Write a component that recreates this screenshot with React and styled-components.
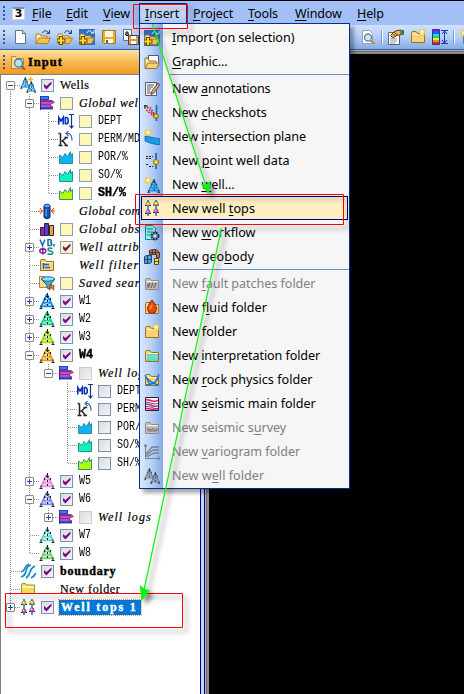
import React from 'react';
import styled, { createGlobalStyle } from 'styled-components';

const Global = createGlobalStyle`
  * { box-sizing: border-box; }
  html, body { margin: 0; padding: 0; background: #000; overflow: hidden; }
`;

const Window = styled.div`
  position: relative; width: 464px; height: 694px; overflow: hidden;
  display: flex; flex-direction: column; background: #000;
  border-top: 1px solid #000;
  font-family: "Noto Sans", "Open Sans", sans-serif; color: #000;
`;
const MenuBar = styled.div`
  height: 24px; flex: none; display: flex; align-items: center; background: #a2c0f6; padding-left: 3px;
`;
const Grip = styled.div`
  width: 2px; height: 14px; flex: none;
  background: repeating-linear-gradient(to bottom, #39558c 0 2px, transparent 2px 4px);
`;
const MenuTitle = styled.span`
  width: ${p => p.$w}px; height: 22px; margin-top: 2px; flex: none; font-size: 12.5px; line-height: 22px; white-space: pre;
  letter-spacing: -0.1px;
  u { text-underline-offset: 2px; }
  ${p => p.$open && `
    margin-left: -6px; margin-right: 6px; padding-left: 5px; border: 1px solid #002d96; border-bottom: 0;
    line-height: 20px; background: linear-gradient(#dbe8fd, #a9c5f3);
  `}
`;
const AppMark = styled.div`
  width: 13px; height: 13px; margin: 0 7px 0 7px; background: #fff; border: 1px solid #d0d8e6;
  border-top: 2px solid #7d93bb; font: bold 11px/10px "DejaVu Sans", sans-serif; text-align: center;
`;
const ToolBar = styled.div`
  height: 25px; flex: none; display: flex; align-items: center; padding-left: 3px;
  background: linear-gradient(#cfe1fc, #b5d0f7 50%, #85aae4);
  border-bottom: 1px solid #3b619c;
`;
const ToolIcon = styled.div`
  width: 16px; height: 16px; flex: none; margin-left: ${p => p.$gap ?? 6}px; display: flex;
`;
const ToolSep = styled.div`
  width: 2px; height: 14px; flex: none; margin-left: ${p => p.$gap}px; background: #6d93cf; border-right: 1px solid #fff;
`;
const Workspace = styled.div`flex: 1; min-height: 0; display: flex;`;
const InputPane = styled.div`width: 200px; flex: none; display: flex; flex-direction: column;`;
const PaneHeader = styled.div`
  height: 24px; flex: none; display: flex; align-items: center; padding-left: 3px; gap: 5px;
  background: linear-gradient(#ffe2a0, #f8b751 50%, #ef9b23);
`;
const PaneTitle = styled.span`
  font: bold 12.5px/20px "Liberation Serif", serif; letter-spacing: 1px; -webkit-text-stroke: .4px #000; margin-left: -3px;
`;
const Tree = styled.div`
  flex: 1; min-height: 0; border-left: 1px solid #808080; border-top: 1px solid #808080; background: #fff; padding-top: 1px; overflow: hidden;
`;
const Splitter = styled.div`
  width: 9px; flex: none;
  background: linear-gradient(to right, #000080 0 1px, #c3d5fb 1px 4px, #000080 4px 5px, #b8b8b8 5px 6px, #6e6e6e 6px 7px, #8f8f8f 7px 9px);
`;
const Canvas = styled.div`
  flex: 1; background: linear-gradient(#a9a9a9 0 1px, #6f6f6f 1px 2px, #8b8b8b 2px 4px, #000 4px);
`;

const Row = styled.div`height: 18px; display: flex; align-items: center; white-space: pre;`;
const Guide = styled.div`
  width: 19px; height: 18px; flex: none; position: relative;
  &::before {
    content: ""; position: absolute; left: 9px; width: 1px;
    top: ${p => (p.$kind === 'f' ? 9 : 0)}px; bottom: ${p => (p.$kind === 'l' ? 9 : 0)}px;
    background: ${p => (p.$kind === ' ' ? 'none' : 'repeating-linear-gradient(to bottom, #909090 0 1px, transparent 1px 2px)')};
  }
  &::after {
    content: ""; position: absolute; left: 10px; right: 0; top: 9px; height: 1px;
    background: ${p => ('ftl'.includes(p.$kind) ? 'repeating-linear-gradient(to right, #909090 0 1px, transparent 1px 2px)' : 'none')};
  }
`;
const Expander = styled.div`
  position: absolute; z-index: 1; left: 5px; top: 5px; width: 9px; height: 9px; background: #fafafa; border: 1px solid #8c8c8c; border-radius: 1px;
  &::before { content: ""; position: absolute; left: 1px; top: 3px; width: 5px; height: 1px; background: #234a9a; }
  &::after { content: ""; position: absolute; left: 3px; top: 1px; width: 1px; height: 5px; background: ${p => (p.$open ? 'none' : '#234a9a')}; }
`;
const IconSlot = styled.div`width: 16px; height: 16px; flex: none; display: flex;`;
const CheckSlot = styled.div`width: 24px; flex: none; display: flex; padding-left: 5px;`;
const Box = styled.div`
  width: 13px; height: 13px; display: flex;
  border: 1px solid ${p => (p.$kind === 'dim' ? '#cccccc' : p.$kind[0] === 'y' ? '#8c9fb0' : '#7892b5')};
  background: ${p => (p.$kind[0] === 'y' ? '#fdf8b8' : 'linear-gradient(135deg, #dcdcdc, #f4f4f4)')};
`;
const Label = styled.span`
  font-family: "Liberation Mono", monospace; font-size: 12px; line-height: 15px; height: 15px;
  font-weight: ${p => (p.$bold ? 700 : 400)};
  -webkit-text-stroke: ${p => (p.$bold ? '.4px' : '0')};
  transform: scaleX(${p => (p.$bold ? 0.972 : 0.833)}); transform-origin: 0 50%;
`;
const SerifLabel = styled.span`
  font-family: "Liberation Serif", serif; font-size: 12px; line-height: 15px; height: 15px;
  font-weight: ${p => (p.$bold ? 700 : 400)}; font-style: ${p => (p.$italic ? 'italic' : 'normal')};
  letter-spacing: ${p => p.$ls}px; -webkit-text-stroke: ${p => (p.$bold ? '.4px' : '.2px')};
  ${p => p.$selected && 'color: #fff; background: #0078d7; outline: 1px dotted #f0a050; width: 82px; padding-left: 2px; margin-left: -1px;'}
`;

const DropMenu = styled.div`
  position: absolute; left: 139px; top: 22px; width: 211px; height: 466px; border: 1px solid #002d96;
  padding-top: 1px; box-shadow: 4px 4px 4px rgba(0,0,0,.35); display: flex; flex-direction: column;
  background: linear-gradient(to right, #dce9fc, #b5cff5 12px, #83a9e6 23px, #f6f6f6 23px);
`;
const Item = styled.div`
  height: 24px; flex: none; display: flex; align-items: center; white-space: pre;
  margin: 0 1px; padding-left: ${p => (p.$active ? 2 : 3)}px; padding-top: ${p => (p.$active ? 0 : 1)}px; gap: 12px;
  font-size: 12.6px; color: ${p => (p.$disabled ? '#808080' : '#000')};
  border: ${p => (p.$active ? '1px solid #000080' : '0')}; background: ${p => (p.$active ? '#ffeec2' : 'none')};
  u { text-underline-offset: 2px; }
`;
const ItemText = styled.span`letter-spacing: ${p => p.$ls}px;`;
const Divider = styled.div`height: 1px; flex: none; margin: 1px 0 1px 30px; background: #6a8ccb;`;
const Marks = styled.svg`position: absolute; left: 0; top: -1px; pointer-events: none;`;

const Svg = ({ children }) => <svg width="16" height="16" viewBox="0 0 16 16">{children}</svg>;
const FolderShape = ({ fill = '#f6d27a', stroke = '#9b7020' }) => (
  <g><path d="M1.500 13.500V3.500q0-1 1-1h3.500l1.500 2h7v9z" fill={fill} stroke={stroke} /><path d="M2.500 5.500h11" stroke="#fff6d0" /></g>
);
const Spark = ({ x = 12, y = 3 }) => (
  <g transform={`translate(${x} ${y})`}><path d="M-3-3l6 6m0-6l-6 6M0-3.500v7M-3.500 0h7" stroke="#f0c440" strokeWidth="1.300" /><circle r="2" fill="#fff5a5" /></g>
);
const OpenFolder = () => (
  <g><path d="M1 14V5h4l1 2h6v2" fill="#fff0b8" stroke="#b07d1e" /><path d="M1 14.500L4 9h11.500l-3 5.500z" fill="#f5c154" stroke="#b07d1e" /></g>
);
const Hop = () => <path d="M7.500 4c1-3 4.500-3 6 0M14.500 1v3.500h-3" fill="none" stroke="#203a6b" />;
const Plus = () => <path d="M4 7v9M-.5 11.500h9" stroke="#6d4c00" strokeWidth="4" />;
const PlusTop = () => <path d="M4 8v7M.5 11.500h7" stroke="#ffdc20" strokeWidth="2" />;
const Well = ({ c }) => (
  <g fill="none" stroke={c}>
    <path d="M8 1L2 14M8 1L14 14" strokeWidth="1.900" />
    <path d="M5 6.500h6M4 9.500h8M1 13.500h14" strokeWidth="1.300" />
    <path d="M4 10l8 3M12 10l-8 3" strokeWidth=".9" />
    <path d="M8.500 0v5M8.500 7v2M8.500 11v2M7 3.500h3M5.500 5v2M11.500 5v2M.5 15.500h3M12.500 15.500h3M2 12.500v3M14 12.500v3" stroke="#222" />
  </g>
);
const Area = ({ c }) => <path d="M1.500 14.500V6L5 8.500L7 4.500L9.500 7.500L12.500 2.500V6.500L14.500 4.500V14.500z" fill={c} stroke="#2f8f8f" />;
const Tops = () => (
  <g><path d="M4 0v16M12 0v16" stroke="#1783f0" strokeWidth="1.600" />
    {[[4, 4, '#ffd51c'], [12, 3.500, '#ffd51c'], [4, 12, '#e04ae8'], [12, 11, '#e04ae8']].map(([x, y, f], i) => (
      <g key={i}><path d={`M${x - 3} ${y + 1.500}h6`} stroke="#222" /><circle cx={x} cy={y} r="2.100" fill={f} stroke="#54432a" strokeWidth=".6" /><circle cx={x - .6} cy={y - .7} r=".7" fill="#fff" /></g>))}
  </g>
);

const art = {
  page: <g><path d="M2.500 1.500h7l3 3v10h-10z" fill="#fff" stroke="#65718b" /><path d="M9.500 1.500v3h3" fill="#d5dced" stroke="#65718b" /></g>,
  open: <g><OpenFolder /><Hop /></g>,
  openPlus: <g><OpenFolder /><Hop /><Plus /><PlusTop /></g>,
  importSel: <g><path d="M0 0h16v16H0z" fill="#2e6fc4" /><OpenFolder /><path d="M8 4c1-3 4-3 5 0M15 1v3h-3" fill="none" stroke="#fff" /><Plus /><PlusTop /></g>,
  floppy: <g><path d="M1.500 1.500h13v13h-12l-1-1z" fill="#e6ad39" stroke="#a87920" /><path d="M4 2h8v6H4z" fill="#fff6d4" /><path d="M4 10h8v4H4z" fill="#fff" /><path d="M5 11h2v3H5z" fill="#7e5a14" /></g>,
  saveAs: <g><path d="M.5 .5h8v11h-8z" fill="#fff" stroke="#5f6f8e" /><path d="M2 4h4m-2-2v5m-2-2l2 2 2-2" fill="none" stroke="#111" /><path d="M5.500 6.500h10v9h-10z" fill="#d99b55" stroke="#674018" /><path d="M8 7h5v3H8zM8 12h5v3H8z" fill="#fff" /></g>,
  preview: <g><path d="M2.500 1.500h7l3 3v10h-10z" fill="#fff" stroke="#98a4b6" /><path d="M10.500 11.500l4 3.500" stroke="#c18a34" strokeWidth="2" /><circle cx="8" cy="8.500" r="3.500" fill="#cfe9f7" stroke="#5f88a5" strokeWidth="1.300" /></g>,
  hand: <g><path d="M.5 3.500h11v12H.5z" fill="#fff" stroke="#57627c" /><path d="M2 10h7M2 12h7M2 14h5" stroke="#8a94aa" /><path d="M2.500 6.500L7 2l6-1v5l-4 0-4 3z" fill="#e0b84e" stroke="#604516" /><path d="M4 4l4 4M6 3l4 4" stroke="#604516" strokeWidth=".8" /><path d="M13 1h3v5h-3z" fill="#3c7a50" /></g>,
  newFolder: <g><FolderShape /><Spark /></g>,
  scale: <g>{['#9a16e8', '#2459ff', '#14dce8', '#27d744', '#f7ef21', '#f68b1e', '#e91d27'].map((c, i) => <path key={c} d={`M0 ${i * 2 + 1}h8v2H0z`} fill={c} />)}<path d="M.5 .5h7v15h-7zM9 1.500h7M9 14.500h7M12.500 2v12M10 5l2.500-3L15 5M10 11l2.500 3L15 11" fill="none" stroke="#173d9c" /></g>,
  sparkPage: <g><path d="M3.500 3.500h11v11h-11z" fill="#fff" stroke="#65718b" /><Spark x={4} y={4} /></g>,
  finder: <g><path d="M1.500 14.500v-12h4l1 2h7v10z" fill="#f8dd9b" stroke="#b48a38" /><path d="M11 12l4 3.500" stroke="#826137" strokeWidth="2.200" /><circle cx="8.500" cy="9" r="4" fill="#b8e2fb" stroke="#47769a" strokeWidth="1.300" /></g>,
  graphic: <g><path d="M4.500 1.500h10v9h-10z" fill="#fff" stroke="#445b78" /><path d="M1 14V4h3l1 3h7v2" fill="#ffe9a5" stroke="#947026" /><path d="M1 14.500L4 9h11.500l-3 5.500z" fill="#f8d070" stroke="#947026" /></g>,
  wells: <g><g transform="translate(0 0) scale(.65 .75)"><Well c="#1489db" /></g><g transform="translate(6 4) scale(.65 .75)"><Well c="#1489db" /></g><path d="M10.500 0v5M8 2.500h5" stroke="#efb82a" strokeWidth="1.700" /></g>,
  logs: <g><path d="M1 1h9v2H9v2h4l3 2.500-4 2v1l2 1v3H1z" fill="#7a35b8" /><path d="M1 1h9v4H1z" fill="#2446c4" /><path d="M2 3h7" stroke="#48c0ee" /><path d="M2 6h11v2H1z" fill="#8a2a9c" /><path d="M2 7h11l3 .8-5 1.200H2z" fill="#ef3e9b" /><path d="M2 11h9" stroke="#6c8af2" strokeWidth="1.300" /><path d="M1 13.500h13" stroke="#2a39a8" /><path d="M1.500 1v14" stroke="#3e247c" /></g>,
  md: <g><path d="M.8 11.500V4.500l2.200 3.500 2.200-3.500v7M7.300 4.500v6.300h1c2.600 0 2.600-6.300 0-6.300z" fill="none" stroke="#0a34bd" strokeWidth="1.600" /><path d="M11 1.500h5M13.500 2v13M11.500 12.500l2 2.500 2-2.500" stroke="#143987" strokeWidth="1.200" fill="none" /></g>,
  perm: <g><path d="M2.500 2.500v12M8.500 6.500l-5 4M4.500 9.500l4 5M.5 2.500h2M.5 14.500h4M6.500 14.500h3.500M6.500 6.500h3.500" stroke="#262626" strokeWidth="1.500" /><path d="M9 2.500h2q3 1.500 3 7M10.500 0L8 2.500l2.500 2.500" fill="none" stroke="#3566b7" strokeWidth="1.200" /></g>,
  por: <Area c="#08b4ff" />, so: <Area c="#0af5bb" />, sh: <Area c="#b3ff00" />,
  completion: <g><path d="M5 3v11c0 2 6 2 6 0V3z" fill="#1455ba" stroke="#111f55" /><ellipse cx="8" cy="3" rx="3" ry="1.800" fill="#62aaff" stroke="#16438e" /><path d="M1 5l2.500 3L1 11M15 5l-2.500 3L15 11M0 8h4M12 8h4" fill="none" stroke="#e24518" /><path d="M7 6v7" stroke="#67bcff" /></g>,
  observed: <g stroke="#302040"><path d="M1.500 6.500h4v8h-4z" fill="#9d25ad" /><path d="M5.500 2.500h4v12h-4z" fill="#5d3ada" /><path d="M10.500 4.500h4v10h-4z" fill="#e4ad2a" /></g>,
  attrs: <g fill="none" strokeWidth="1.500"><path d="M1 .5l2.500 6L6 .5M9 .5v6h2.500c2-.5 1.500-3-.5-3 2 0 1.500-3-.5-3zM15 5v2.500" stroke="#146c9b" /><ellipse cx="3.800" cy="12" rx="3" ry="2.300" stroke="#8c189b" /><path d="M3.800 8.500v7" stroke="#8c189b" /><path d="M13.500 9.500q-4.500-1.500-4.500 1 0 1.200 2.500 1.500 3.500 1 1.500 3-2 .8-4.500-.3" stroke="#159080" /></g>,
  filter: <g><FolderShape /><path d="M4.500 6v6M5 7.500h5M6 10.500h5" stroke="#1766bd" strokeWidth="1.500" /></g>,
  saved: <g><path d="M.5 1.500h5l1 2h6v9H.5z" fill="#f9dc95" stroke="#b08a40" /><path d="M2 4h14l-5 6v4l-3-1V10z" fill="#4aafdf" stroke="#155d8e" /><ellipse cx="9" cy="4" rx="6.500" ry="2.200" fill="#99daf5" stroke="#176a9d" /><path d="M10.500 15.500v-5h4v5M11 13h4" fill="none" stroke="#a45c22" strokeWidth="1.500" /></g>,
  w1: <Well c="#168ff0" />, w2: <Well c="#17d688" />, w3: <Well c="#9ddc16" />, w4: <Well c="#e49a16" />, w5: <Well c="#e98be5" />, w6: <Well c="#858bea" />, w7: <Well c="#65d5d5" />, w8: <Well c="#71ce73" />,
  boundary: <g fill="none" stroke="#1489c8" strokeWidth="1.700"><path d="M1 9q3-1 4-4t4-4M1 14q4-1 5-6t5-6M6 15q3-2 4-6t5-6M11 15q3-1 5-5" /></g>,
  folder: <g><path d="M1.500 12.500v-9q0-1 1-1h3l1 1.500h8v8.500z" fill="#f2dc60" stroke="#a08a2d" /><path d="M2 6h12" stroke="#fff7a8" strokeWidth="2" /></g>,
  tops: <Tops />,
  notes: <g><path d="M1.500 1.500h11v13h-11z" fill="#f8f8f8" stroke="#555d68" /><path d="M3 4h7M3 6h6M3 8h4M3 10h3M3 12h6" stroke="#505a68" /><path d="M14 2L8 10l-1 3.500 3-1.500 5.500-8z" fill="#d9a59c" stroke="#734429" /></g>,
  checkshots: <g><path d="M12.500 0v16" stroke="#1769c9" strokeWidth="1.600" /><path d="M3 2l8 9M2 5l9 7M6 2l5 8" stroke="#d32532" strokeDasharray="2 1" strokeWidth="1.400" /><path d="M0 1h4M1 0v4" stroke="#111" /><circle cx="12" cy="11" r="2.300" fill="#ffd21f" stroke="#75550d" /></g>,
  plane: <g><path d="M1 7q6 1 15 3v6Q7 15 1 12z" fill="#1d99e7" stroke="#075c9c" strokeWidth=".7" /><Spark x={4} y={3.500} /></g>,
  point: <g><path d="M12 0v16" stroke="#175cc1" strokeWidth="1.600" /><path d="M2 3.500h7M2 5.500h5M2 11.500h3M5 13.500h4" stroke="#222" strokeDasharray="2 1" /><circle cx="12" cy="9" r="2.500" fill="#ffd72a" stroke="#8a6619" /></g>,
  newWell: <g><g transform="translate(3 2) scale(.85 .88)"><Well c="#198be0" /></g><Spark x={4} y={3.500} /></g>,
  workflow: <g><path d="M1.500 .5h7l3 3v11h-10z" fill="#8af2ec" stroke="#1c8190" /><path d="M3 4h6M3 7h6M3 10h4" stroke="#078c99" /><circle cx="11" cy="11" r="3.500" fill="#8390b5" stroke="#25374f" strokeWidth="2" strokeDasharray="2 .8" /><circle cx="11" cy="11" r="1.300" fill="#dce4f7" /></g>,
  geobody: <g strokeWidth=".9"><path d="M5.500 1.500l3-1h4l3 3v5h-3v-3h-7z" fill="#c8703a" stroke="#3a302e" /><path d="M.5 7.500l2-1h5v7l-2 1h-5z" fill="#4c9fe4" stroke="#153a69" /><path d="M3.500 7v8M0 10.500h7M8.500 1v4M11.500 1v5M6 3.500h9" stroke="#303849" /><path d="M10.500 9.500h4v6h-4z" fill="#fbe029" stroke="#473912" /><path d="M10 12.500h5" stroke="#473912" /></g>,
  fault: <g><FolderShape fill="#bdbdbd" stroke="#8a8a8a" /><path d="M4 12l2-5M7 12l2-5M10 12l2-5M4 8v3" fill="none" stroke="#666" strokeWidth="1.300" /></g>,
  fluid: <g><FolderShape /><path d="M8 0Q3 6 3.500 9.500q.5 4 4.500 4t4.500-4Q13 6 8 0z" fill="#ea4a10" stroke="#82270c" /><path d="M6 9l2-4" stroke="#ffac4f" strokeWidth="1.500" /></g>,
  interp: <g><FolderShape /><path d="M3 6h11v7H3z" fill="#34e0e4" /><path d="M3 8h11M3 10h11M6 6v7M9 6v7M12 6v7" stroke="#c6d98a" strokeWidth=".6" /></g>,
  rock: <g><FolderShape /><path d="M1 3l4 8q3 2 6 0l4-9M2 13q7 0 12-6M3 6q5 6 12 7" fill="none" stroke="#1179dc" strokeWidth="1.300" /></g>,
  seismic: <g><path d="M1.500 1.500h13v13h-13z" fill="#fff" /><path d="M2 3.500l5 1 3 1 4-1M2 8l5 1 3 1.500 4-.5M2 12.500l5 .5 3 1h4" fill="none" stroke="#ed2343" strokeWidth="1.600" /><path d="M2 6l5 1 3 1 4-.5M2 10.500l5 .5 3 1.500h4" fill="none" stroke="#4055d5" strokeWidth="1.100" /><path d="M1.500 1.500h13v13h-13z" fill="none" stroke="#391a35" /></g>,
  survey: <g><FolderShape fill="#c1c1c1" stroke="#8a8a8a" /><path d="M4 11V8l3 2 2-2 2 3 2-3v3z" fill="#aaa" stroke="#777" /></g>,
  variogram: <g fill="none" stroke="#74818e"><path d="M1.500 0v14.500H16M0 3l1.500-3L3 3M13.500 12l2.500 2.500-2.500 2" /><path d="M2 10l6-7h7M2 12l7-6h6M3 13l7-4h5" strokeWidth="1.300" /></g>,
  wellFolder: <g><g transform="translate(0 0) scale(.65 .75)"><Well c="#778596" /></g><g transform="translate(6 4) scale(.65 .75)"><Well c="#778596" /></g></g>,
};
const Icon = ({ name }) => <Svg>{art[name]}</Svg>;

/* guides, expander, icon, checkbox, text, style, letter spacing */
const rows = [
  ['f', '-', 'wells', 'gc', 'Wells', 'r', 0.45],
  ['vt', '-', 'logs', 'y', 'Global well logs', 'i', 0.65],
  ['vvt', '', 'md', 'y', 'DEPT'], ['vvt', '', 'perm', 'y', 'PERM/MD'], ['vvt', '', 'por', 'y', 'POR/%'], ['vvt', '', 'so', 'y', 'SO/%'], ['vvl', '', 'sh', 'y', 'SH/%', 'n'],
  ['vt', '', 'completion', '', 'Global completions', 'i', 0.55], ['vt', '', 'observed', 'y', 'Global observed', 'i', 0.8],
  ['vt', '+', 'attrs', 'yc', 'Well attributes', 'i', 0.9], ['vt', '', 'filter', '', 'Well filters', 'i', 1.2], ['vt', '', 'saved', 'y', 'Saved searches', 'i', 0.9],
  ['vt', '+', 'w1', 'gc', 'W1'], ['vt', '+', 'w2', 'gc', 'W2'], ['vt', '+', 'w3', 'gc', 'W3'], ['vt', '-', 'w4', 'gc', 'W4', 'n'],
  ['vvl', '-', 'logs', 'dim', 'Well logs', 'i', 1],
  ['vv t', '', 'md', 'g', 'DEPT'], ['vv t', '', 'perm', 'g', 'PERM/MD'], ['vv t', '', 'por', 'g', 'POR/%'], ['vv t', '', 'so', 'g', 'SO/%'], ['vv l', '', 'sh', 'g', 'SH/%'],
  ['vt', '+', 'w5', 'gc', 'W5'], ['vt', '-', 'w6', 'gc', 'W6'], ['vvl', '+', 'logs', 'dim', 'Well logs', 'i', 1.1], ['vt', '', 'w7', 'gc', 'W7'], ['vl', '', 'w8', 'gc', 'W8'],
  ['t', '', 'boundary', 'gc', 'boundary', 'b', 0.8], ['t', '', 'folder', '', 'New folder', 'r', 0.6], ['l', '+', 'tops', 'gc', 'Well tops 1', 's', 1.8],
];
const TreeRow = ({ row: [guides, exp, icon, check, text, style, ls] }) => (
  <Row>
    {[...guides].map((k, i) => <Guide key={i} $kind={k}>{exp && i === guides.length - 1 && <Expander $open={exp === '-'} />}</Guide>)}
    <IconSlot><Icon name={icon} /></IconSlot>
    <CheckSlot>{check && <Box $kind={check}>{check.endsWith('c') && <svg width="11" height="11" viewBox="0 0 11 11"><path d="M2 4v3l2.500 2.500L9.500 4V1.500L4.500 6z" fill="#790c83" /></svg>}</Box>}</CheckSlot>
    {ls
      ? <SerifLabel $ls={ls} $italic={style === 'i'} $bold={style === 'b' || style === 's'} $selected={style === 's'}>{text}</SerifLabel>
      : <Label $bold={style === 'n'}>{text}</Label>}
  </Row>
);

const titles = [['File', 34], ['Edit', 37], ['View', 42], ['Insert', 48], ['Project', 55], ['Tools', 47], ['Window', 62], ['Help', 40]];
const items = [
  ['importSel', '_Import (on selection)'], ['graphic', '_Graphic...'], null,
  ['notes', 'New _annotations', '', -0.15], ['checkshots', 'New _checkshots'], ['plane', 'New _intersection plane', '', -0.1], ['point', 'New _point well data', '', 0.03],
  ['newWell', 'New _well...'], ['tops', 'New well _tops', 'active', 0.05], ['workflow', 'New _workflow'], ['geobody', 'New geo_body', '', 0.03], null,
  ['fault', 'New _fault patches folder', 'disabled'], ['fluid', 'New f_luid folder', '', 0.03], ['newFolder', 'New folder', '', 0.05], ['interp', 'New _interpretation folder', '', -0.1],
  ['rock', 'New _rock physics folder', '', 0.02], ['seismic', 'New _seismic main folder'], ['survey', 'New seismic s_urvey', 'disabled'],
  ['variogram', 'New _variogram folder', 'disabled'], ['wellFolder', 'New w_ell folder', 'disabled', 0.04],
];
const Mnemonic = ({ text }) => {
  const i = text.indexOf('_');
  return i < 0 ? text : <>{text.slice(0, i) || null}<u>{text[i + 1]}</u>{text.slice(i + 2)}</>;
};

export default function App() {
  return (
    <Window>
      <Global />
      <MenuBar>
        <Grip /><AppMark>3</AppMark>
        {titles.map(([t, w]) => <MenuTitle key={t} $w={w} $open={t === 'Insert'}><Mnemonic text={'_' + t} /></MenuTitle>)}
      </MenuBar>
      <ToolBar>
        <Grip />
        {['page', 'open', 'openPlus', 'importSel', 'floppy', 'saveAs'].map((n, i) => <ToolIcon key={n} $gap={i ? 6 : 8}><Icon name={n} /></ToolIcon>)}
        <ToolIcon $gap={221}><Icon name="preview" /></ToolIcon><ToolSep $gap={5} />
        <ToolIcon $gap={5}><Icon name="hand" /></ToolIcon><ToolIcon><Icon name="newFolder" /></ToolIcon><ToolIcon><Icon name="scale" /></ToolIcon>
        <ToolSep $gap={5} /><ToolIcon $gap={5}><Icon name="sparkPage" /></ToolIcon>
      </ToolBar>
      <Workspace>
        <InputPane>
          <PaneHeader><Grip /><Icon name="finder" /><PaneTitle>Input</PaneTitle></PaneHeader>
          <Tree>{rows.map((r, i) => <TreeRow key={i} row={r} />)}</Tree>
        </InputPane>
        <Splitter /><Canvas />
      </Workspace>
      <DropMenu>
        {items.map((it, i) => it
          ? <Item key={i} $active={it[2] === 'active'} $disabled={it[2] === 'disabled'}><Icon name={it[0]} /><ItemText $ls={it[3] ?? -0.05}><Mnemonic text={it[1]} /></ItemText></Item>
          : <Divider key={i} />)}
      </DropMenu>
      <Marks width="464" height="694">
        <defs><filter id="shade" x="-20%" y="-20%" width="150%" height="150%"><feDropShadow dx="4" dy="4" stdDeviation="2.500" floodOpacity=".5" /></filter></defs>
        <g fill="none" stroke="#f00" filter="url(#shade)"><path d="M133.500 4.500h54v24h-54z" /><path d="M135.500 194.500h208v30h-208z" /><path d="M5.500 593.500h177v34H5.500z" /></g>
        <g filter="url(#shade)">
          <path d="M152.500 24L206 186M221.500 228L144 590" stroke="#1df01d" strokeWidth="1.300" />
          <path d="M209 195L200.500 183.500L206 185L210.500 180z M141.700 601L139.700 585L144 588.500L149.700 590.500z" fill="#0cf30c" />
        </g>
      </Marks>
    </Window>
  );
}
